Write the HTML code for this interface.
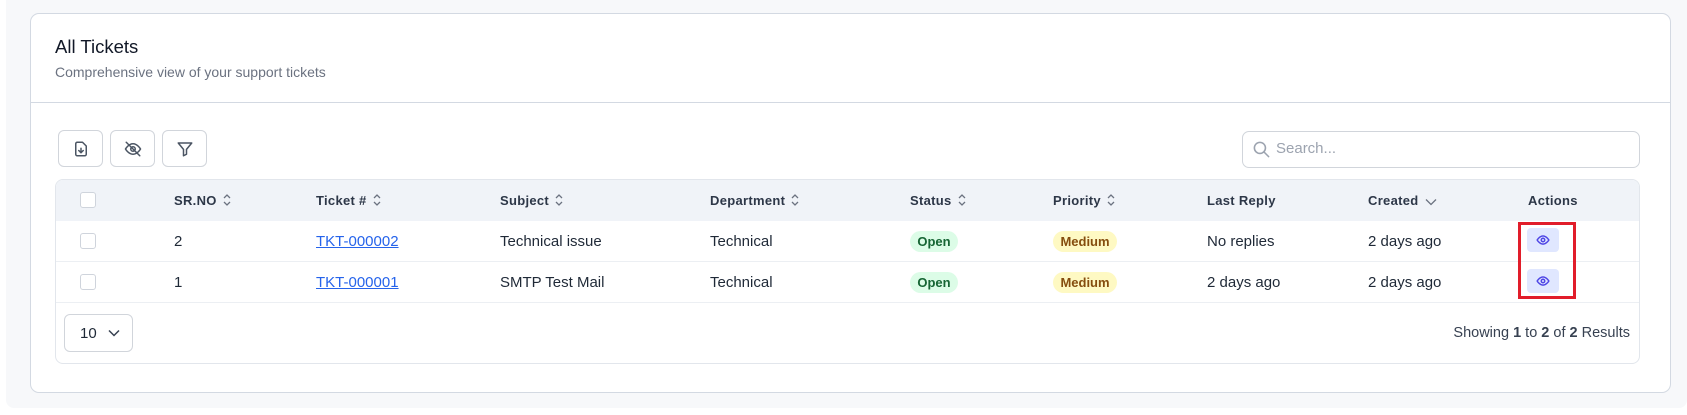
<!DOCTYPE html>
<html><head><style>
*{box-sizing:border-box;margin:0;padding:0}
body{width:1687px;height:415px;background:#fff;font-family:"Liberation Sans",sans-serif;position:relative;overflow:hidden;color:#111827}
.bg{position:absolute;left:6px;top:0;width:1681px;height:408px;background:#f7f8fa;border-radius:0 0 8px 8px}
.card{position:absolute;left:30px;top:13px;width:1641px;height:380px;background:#fff;border:1px solid #d3d9e2;border-radius:9px}
.a{position:absolute}
.btn{position:absolute;top:130px;width:45px;height:37px;border:1px solid #d1d5db;border-radius:6px;background:#fff}
.btn svg{position:absolute;left:13px;top:9px}
.th{position:absolute;top:193px;font-size:13px;font-weight:bold;color:#2d3748;letter-spacing:.3px}
.sort{display:inline-block;margin-left:6px;vertical-align:-1px}
.td{position:absolute;font-size:15px;color:#1f2937}
.cb{position:absolute;left:80px;width:16px;height:16px;border:1px solid #cfd4dc;border-radius:3px;background:#fff}
.open{position:absolute;left:910px;width:48px;height:21px;border-radius:11px;background:#dcfce7;color:#166534;font-size:13px;font-weight:bold;text-align:center;line-height:21px}
.med{position:absolute;left:1053px;width:64px;height:21px;border-radius:11px;background:#fef9c3;color:#854d0e;font-size:13px;font-weight:bold;text-align:center;line-height:21px}
.eye{position:absolute;left:1527px;width:32px;height:24px;border-radius:4px;background:#e0e7ff}
.eye svg{position:absolute;left:9px;top:5px}
a{color:#2563eb;text-decoration:underline}
</style></head><body>
<div class="bg"></div>
<div class="card"></div>
<div class="a" style="left:55px;top:36px;font-size:18.5px;color:#111827">All Tickets</div>
<div class="a" style="left:55px;top:64px;font-size:14px;color:#6b7280">Comprehensive view of your support tickets</div>
<div class="a" style="left:31px;top:102px;width:1639px;height:1px;background:#d3d9e2"></div>

<div class="btn" style="left:58px"><svg width="18" height="18" viewBox="0 0 24 24" fill="none" stroke="#4b5563" stroke-width="2" stroke-linecap="round" stroke-linejoin="round"><path d="M14 3H7a2 2 0 0 0-2 2v14a2 2 0 0 0 2 2h10a2 2 0 0 0 2-2V8z"/><path d="M12 11v6M9 14l3 3 3-3"/></svg></div>
<div class="btn" style="left:110px"><svg width="18" height="18" viewBox="0 0 24 24" fill="none" stroke="#4b5563" stroke-width="2" stroke-linecap="round"><path d="M2 12s4-7 10-7 10 7 10 7-4 7-10 7S2 12 2 12z"/><circle cx="12" cy="12" r="3"/><path d="M3 3l18 18"/></svg></div>
<div class="btn" style="left:162px"><svg width="18" height="18" viewBox="0 0 24 24" fill="none" stroke="#4b5563" stroke-width="2" stroke-linejoin="round"><path d="M3 4h18l-7 8.5V19l-4 2v-8.5z"/></svg></div>

<div class="a" style="left:1242px;top:131px;width:398px;height:37px;border:1px solid #d1d5db;border-radius:7px"></div>
<svg class="a" style="left:1252px;top:140px" width="19" height="19" viewBox="0 0 24 24" fill="none" stroke="#9ca3af" stroke-width="2" stroke-linecap="round"><circle cx="10" cy="10" r="7"/><path d="M15 15l6 6"/></svg>
<div class="a" style="left:1276px;top:140px;font-size:15px;color:#9ca3af">Search...</div>

<div class="a" style="left:55px;top:179px;width:1585px;height:185px;border:1px solid #e2e6ec;border-radius:8px;overflow:hidden">
 <div style="height:41px;background:#f0f3f8"></div>
 <div style="position:absolute;top:81px;left:0;right:0;height:1px;background:#eceff3"></div>
 <div style="position:absolute;top:122px;left:0;right:0;height:1px;background:#eceff3"></div>
</div>
<div class="cb" style="top:192px"></div>
<div class="th" style="left:174px">SR.NO<svg class="sort" width="8" height="12" viewBox="0 0 8 12" fill="none" stroke="#6b7280" stroke-width="1.3"><path d="M1 4l3-3 3 3M1 8l3 3 3-3"/></svg></div>
<div class="th" style="left:316px">Ticket #<svg class="sort" width="8" height="12" viewBox="0 0 8 12" fill="none" stroke="#6b7280" stroke-width="1.3"><path d="M1 4l3-3 3 3M1 8l3 3 3-3"/></svg></div>
<div class="th" style="left:500px">Subject<svg class="sort" width="8" height="12" viewBox="0 0 8 12" fill="none" stroke="#6b7280" stroke-width="1.3"><path d="M1 4l3-3 3 3M1 8l3 3 3-3"/></svg></div>
<div class="th" style="left:710px">Department<svg class="sort" width="8" height="12" viewBox="0 0 8 12" fill="none" stroke="#6b7280" stroke-width="1.3"><path d="M1 4l3-3 3 3M1 8l3 3 3-3"/></svg></div>
<div class="th" style="left:910px">Status<svg class="sort" width="8" height="12" viewBox="0 0 8 12" fill="none" stroke="#6b7280" stroke-width="1.3"><path d="M1 4l3-3 3 3M1 8l3 3 3-3"/></svg></div>
<div class="th" style="left:1053px">Priority<svg class="sort" width="8" height="12" viewBox="0 0 8 12" fill="none" stroke="#6b7280" stroke-width="1.3"><path d="M1 4l3-3 3 3M1 8l3 3 3-3"/></svg></div>
<div class="th" style="left:1207px">Last Reply</div>
<div class="th" style="left:1368px">Created<svg class="sort" width="12" height="8" viewBox="0 0 12 8" fill="none" stroke="#6b7280" stroke-width="1.3"><path d="M1 1.5l5 5 5-5"/></svg></div>
<div class="th" style="left:1528px">Actions</div>

<div class="cb" style="top:233px"></div>
<div class="td" style="left:174px;top:233px">2</div>
<div class="td" style="left:316px;top:233px"><a>TKT-000002</a></div>
<div class="td" style="left:500px;top:233px">Technical issue</div>
<div class="td" style="left:710px;top:233px">Technical</div>
<div class="open" style="top:231px">Open</div>
<div class="med" style="top:231px">Medium</div>
<div class="td" style="left:1207px;top:233px">No replies</div>
<div class="td" style="left:1368px;top:233px">2 days ago</div>
<div class="eye" style="top:228px"><svg width="14" height="14" viewBox="0 0 24 24" fill="none" stroke="#4f46e5" stroke-width="2.5"><path d="M2 12s4-7 10-7 10 7 10 7-4 7-10 7S2 12 2 12z"/><circle cx="12" cy="12" r="3"/></svg></div>

<div class="cb" style="top:274px"></div>
<div class="td" style="left:174px;top:274px">1</div>
<div class="td" style="left:316px;top:274px"><a>TKT-000001</a></div>
<div class="td" style="left:500px;top:274px">SMTP Test Mail</div>
<div class="td" style="left:710px;top:274px">Technical</div>
<div class="open" style="top:272px">Open</div>
<div class="med" style="top:272px">Medium</div>
<div class="td" style="left:1207px;top:274px">2 days ago</div>
<div class="td" style="left:1368px;top:274px">2 days ago</div>
<div class="eye" style="top:269px"><svg width="14" height="14" viewBox="0 0 24 24" fill="none" stroke="#4f46e5" stroke-width="2.5"><path d="M2 12s4-7 10-7 10 7 10 7-4 7-10 7S2 12 2 12z"/><circle cx="12" cy="12" r="3"/></svg></div>

<div class="a" style="left:1518px;top:222px;width:58px;height:77px;border:3px solid #e11d2a"></div>

<div class="a" style="left:64px;top:314px;width:69px;height:38px;border:1px solid #d1d5db;border-radius:6px"></div>
<div class="a" style="left:80px;top:325px;font-size:15px;color:#1f2937">10</div>
<svg class="a" style="left:108px;top:329px" width="12" height="8" viewBox="0 0 12 8" fill="none" stroke="#374151" stroke-width="1.5"><path d="M1 1.5l5 5 5-5"/></svg>
<div class="a" style="left:1394px;top:325px;width:236px;text-align:right;font-size:14.5px;color:#374151">Showing <b>1</b> to <b>2</b> of <b>2</b> Results</div>
</body></html>
